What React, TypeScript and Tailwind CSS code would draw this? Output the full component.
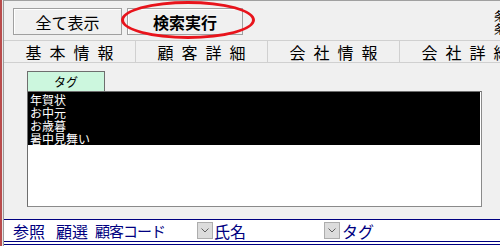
import React from "react";

const tabs = ["基本情報", "顧客詳細", "会社情報", "会社詳細"];
const tags = ["年賀状", "お中元", "お歳暮", "暑中見舞い"];

function Dropdown() {
  return (
    <div className="w-[16px] h-[17px] bg-[#dcdcdc] border border-[#adadad] flex items-center justify-center shrink-0">
      <svg width="8" height="5" viewBox="0 0 8 5">
        <path d="M0.5 0.5 L4 4 L7.5 0.5" stroke="#606060" strokeWidth="1" fill="none" />
      </svg>
    </div>
  );
}

export default function App() {
  return (
    <div
      className="relative w-[500px] h-[246px] overflow-hidden bg-[#f0f0f0] flex text-black"
      style={{ fontFamily: '"Noto Sans CJK JP", "Noto Sans", sans-serif' }}
    >
      {/* left window edge */}
      <div className="w-[2px] h-full bg-[#b94c4c] shrink-0" />
      <div className="w-[1px] h-full bg-[#e8e8e8] shrink-0" />
      <div className="w-[1px] h-full bg-[#9a9a9a] shrink-0" />

      <div className="flex flex-col w-[496px] shrink-0">
        {/* top toolbar */}
        <div className="h-[40px] border-t border-[#a0a0a0] flex items-start">
          <button className="mt-[7px] ml-[9px] w-[109px] h-[27px] bg-[#f0f0f0] border border-[#a0a0a0] shadow-[inset_1px_1px_0_#ffffff] text-[16px] leading-none flex items-center justify-center">
            全て表示
          </button>
          <button className="mt-[7px] ml-[5px] w-[116px] h-[27px] bg-[#f0f0f0] border border-[#a0a0a0] shadow-[inset_1px_1px_0_#ffffff] text-[16px] font-bold leading-none flex items-center justify-center">
            検索実行
          </button>
          <div className="ml-auto mr-[-6px] mt-[8px] flex flex-col text-[12px] leading-[13px]">
            <span>条</span>
            <span>条</span>
          </div>
        </div>

        {/* tab strip */}
        <div className="h-[23px] border-t border-b border-[#d0d0d0] flex">
          {tabs.map((t) => (
            <div
              key={t}
              className="w-[132px] shrink-0 border-r border-[#d0d0d0] flex items-center justify-center gap-[8px] text-[16px] leading-none"
            >
              {t.split("").map((c, i) => (
                <span key={i}>{c}</span>
              ))}
            </div>
          ))}
        </div>

        {/* content */}
        <div className="h-[156px] pl-[23px] pt-[8px]">
          <div className="w-[78px] h-[20px] bg-[#ccf7de] border border-b-0 border-[#6e6e6e] flex items-center justify-center text-[12px] leading-none">
            タグ
          </div>
          <div className="w-[455px] h-[116px] bg-white border border-[#6e6e6e] border-r-[#8a8a8a] border-b-[#8a8a8a]">
            <div className="bg-black text-white text-[12px] leading-[13px] pt-[1px] mr-[1px]">
              {tags.map((t) => (
                <div key={t} className="pl-[2px] h-[13px] leading-[13px]">
                  {t}
                </div>
              ))}
            </div>
          </div>
        </div>

        {/* bottom bar */}
        <div className="h-[1px] bg-[#000080]" />
        <div className="h-[21px] bg-white flex items-center pl-[9px] text-[#000080] text-[16px] leading-none">
          <span className="w-[43px]">参照</span>
          <span className="w-[39px]">顧選</span>
          <span className="w-[102px] text-[15px] tracking-[-1px]">顧客コード</span>
          <Dropdown />
          <span className="w-[111px] pl-[1px]">氏名</span>
          <Dropdown />
          <span className="pl-[2px]">タグ</span>
        </div>
        <div className="h-[1px] bg-[#000080]" />
        <div className="h-[2px] bg-white" />
        <div className="h-[1px] bg-[#000080]" />
        <div className="h-[1px] bg-white" />
      </div>

      {/* red annotation ellipse */}
      <div className="absolute left-[121px] top-[1px] w-[134px] h-[38px] rounded-[50%] border-[3px] border-[#e8141c] pointer-events-none" />
    </div>
  );
}
